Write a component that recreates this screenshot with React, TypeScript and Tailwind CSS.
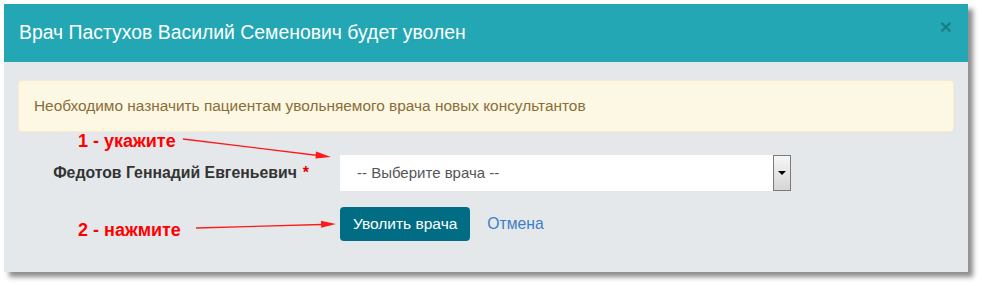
export default function App() {
  return (
    <div className="relative h-[286px] w-[982px] bg-white font-['Liberation_Sans',Arial,sans-serif]">
      <div className="absolute left-[4px] top-[4px] w-[964px] shadow-[5px_5px_5px_rgba(0,0,0,0.45)]">
        {/* Header */}
        <div className="flex h-[58px] items-center justify-between bg-[#23a7b4] pl-[15px] pr-[16px]">
          <h4 className="text-[19.4px] leading-none text-white">Врач Пастухов Василий Семенович будет уволен</h4>
          <span className="-mt-[14px] text-[21px] font-bold leading-none text-black/25">×</span>
        </div>

        {/* Body */}
        <div className="h-[210px] bg-[#e5e8eb] px-[14px] pt-[18px]">
          <div className="rounded-[4px] border border-[#faebcc] bg-[#fcf8e3] px-[15px] py-[15px] text-[15.4px] leading-[20px] text-[#8a6d3b]">
            Необходимо назначить пациентам увольняемого врача новых консультантов
          </div>

          <div className="mt-[23px] flex items-center">
            <label className="w-[322px] pr-[31px] text-right text-[15.8px] font-bold text-[#333]">
              Федотов Геннадий Евгеньевич<span className="ml-[6px] text-[#e50000]">*</span>
            </label>
            <div className="flex h-[36px] w-[451px] items-center bg-white">
              <span className="flex-1 pl-[17px] text-[15px] text-[#555]">-- Выберите врача --</span>
              <span className="flex h-[36px] w-[18px] items-center justify-center border border-[#7b7b7b] bg-gradient-to-b from-[#f6f6f6] to-[#d6d6d6]">
                <span className="h-0 w-0 border-x-[4px] border-t-[4px] border-x-transparent border-t-black" />
              </span>
            </div>
          </div>

          <div className="mt-[16px] flex items-center pl-[322px]">
            <button className="h-[34px] rounded-[4px] bg-[#006d85] px-[13px] text-[15.5px] text-white">Уволить врача</button>
            <a className="ml-[17px] text-[15.7px] text-[#3b7ec4]">Отмена</a>
          </div>
        </div>
      </div>

      {/* Annotations */}
      <span className="absolute left-[78px] top-[128px] text-[18px] font-bold text-[#ff0000]">1 - укажите</span>
      <span className="absolute left-[78px] top-[217px] text-[18px] font-bold text-[#ff0000]">2 - нажмите</span>
      <svg className="pointer-events-none absolute left-0 top-0" width="982" height="286">
        <line x1="183" y1="139" x2="318" y2="155.5" stroke="#ff1a1a" strokeWidth="1.3" />
        <polygon points="331,157 316,151.5 315.5,158.5" fill="#ff1a1a" />
        <line x1="196" y1="228" x2="322" y2="224.5" stroke="#ff1a1a" strokeWidth="1.3" />
        <polygon points="336,224 321,220.8 321.2,227.8" fill="#ff1a1a" />
      </svg>
    </div>
  )
}
